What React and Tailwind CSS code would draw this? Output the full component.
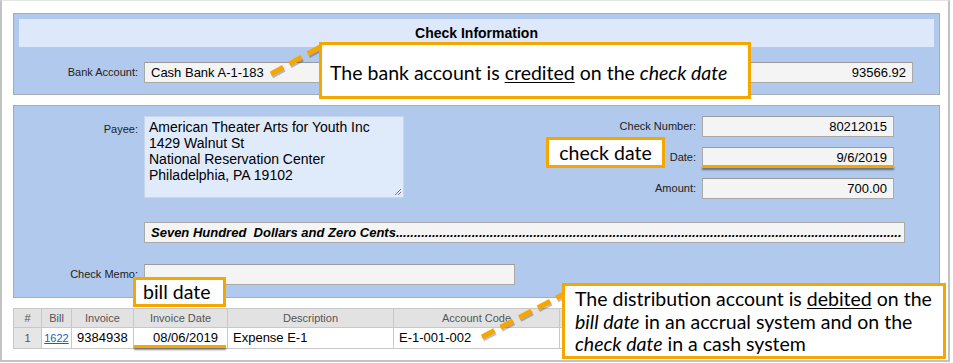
import React from "react";

const arial = { fontFamily: '"Liberation Sans", Arial, sans-serif' };
const callFont = { fontFamily: 'Lato, "Noto Sans", sans-serif' };

function Field({ className = "", children }) {
  return (
    <div
      className={
        "h-[21px] bg-[#f4f4f4] border border-[#a9a9a9] border-t-[#9a9a9a] flex items-center text-[13px] text-black " +
        className
      }
    >
      {children}
    </div>
  );
}

function Callout({ className = "", children }) {
  return (
    <div
      className={"absolute bg-white border-[3px] border-[#f5a700] text-black " + className}
      style={callFont}
    >
      {children}
    </div>
  );
}

export default function App() {
  return (
    <div className="relative w-[953px] h-[363px] bg-white overflow-hidden" style={arial}>
      <div className="w-[950px] h-[362px] border-2 border-t border-[#c2c2c2] border-t-[#e4e4e4]">
        {/* Top panel */}
        <div className="ml-[11px] mt-[12px] w-[927px] h-[82px] bg-[#b1c9ec] border border-[#a6acb5] p-[5px]">
          <div className="h-[28px] bg-[#dde9fb] flex items-center justify-center font-bold text-[14px] text-black">
            Check Information
          </div>
          <div className="flex items-center mt-[15px]">
            <div className="w-[119px] text-right text-[11px] text-[#222]">Bank Account:</div>
            <Field className="ml-[6px] w-[769px] justify-between px-[6px]">
              <span>Cash Bank A-1-183</span>
              <span>93566.92</span>
            </Field>
          </div>
        </div>

        {/* Second panel */}
        <div className="ml-[11px] mt-[10px] w-[927px] h-[193px] bg-[#b1c9ec] border border-[#a6acb5] pt-[10px]">
          <div className="flex items-start h-[86px]">
            <div className="w-[124px] text-right text-[11px] text-[#222] pt-[5px]">Payee:</div>
            <div className="relative ml-[6px] w-[260px] h-[82px] bg-[#dfeafb] border border-[#c8d6ec] px-[4px] pt-[2px] text-[14px] leading-[16px] text-black">
              <div>American Theater Arts for Youth Inc</div>
              <div>1429 Walnut St</div>
              <div>National Reservation Center</div>
              <div>Philadelphia, PA 19102</div>
              <svg className="absolute right-[1px] bottom-[1px]" width="8" height="8" viewBox="0 0 8 8">
                <path d="M7 1 L1 7 M7 4 L4 7" stroke="#777" strokeWidth="1" />
              </svg>
            </div>
            <div className="ml-auto mr-[45px] flex flex-col gap-[10px]">
              {[
                ["Check Number:", "80212015"],
                ["Date:", "9/6/2019"],
                ["Amount:", "700.00"],
              ].map(([l, v]) => (
                <div key={l} className="flex items-center">
                  <div className="w-[100px] text-right text-[11px] text-[#222]">{l}</div>
                  <Field className="ml-[6px] w-[192px] justify-end pr-[6px]">{v}</Field>
                </div>
              ))}
            </div>
          </div>
          <div className="mt-[20px] ml-[130px] w-[761px] h-[21px] bg-[#f4f4f4] border border-[#a9a9a9] flex items-center px-[6px] whitespace-pre font-bold italic text-[13px] text-black">
            <span>{"Seven Hundred  Dollars and Zero Cents" + ".".repeat(140)}</span>
          </div>
          <div className="mt-[21px] flex items-center">
            <div className="w-[124px] text-right text-[11px] text-[#222]">Check Memo:</div>
            <Field className="ml-[6px] w-[371px]" />
          </div>
        </div>

        {/* Table */}
        <div className="ml-[11px] mt-[10px] w-[927px] text-[11px]">
          <div className="flex h-[20px] bg-[#e2e2e2] border border-[#c8c8c8] text-[#555]">
            <div className="w-[28px] flex items-center justify-center border-r border-[#c8c8c8]">#</div>
            <div className="w-[30px] flex items-center justify-center border-r border-[#c8c8c8]">Bill</div>
            <div className="w-[62px] flex items-center justify-center border-r border-[#c8c8c8]">Invoice</div>
            <div className="w-[94px] flex items-center justify-center border-r border-[#c8c8c8]">Invoice Date</div>
            <div className="w-[166px] flex items-center justify-center border-r border-[#c8c8c8]">Description</div>
            <div className="w-[166px] flex items-center justify-center border-r border-[#c8c8c8]">Account Code</div>
            <div className="flex-1" />
          </div>
          <div className="flex h-[21px] bg-white border border-t-0 border-[#c8c8c8] text-[13px] text-black">
            <div className="w-[28px] flex items-center justify-center bg-[#e6e6e6] border-r border-[#c8c8c8] text-[11px] text-[#555]">1</div>
            <div className="w-[30px] flex items-center justify-center border-r border-[#c8c8c8] text-[11px]">
              <span className="text-[#1f5ea8] underline">1622</span>
            </div>
            <div className="w-[62px] flex items-center pl-[5px] border-r border-[#c8c8c8] overflow-hidden whitespace-nowrap">9384938</div>
            <div className="w-[94px] flex items-center justify-center pl-[10px] border-r border-[#c8c8c8]">08/06/2019</div>
            <div className="w-[166px] flex items-center pl-[5px] border-r border-[#c8c8c8]">Expense E-1</div>
            <div className="w-[166px] flex items-center pl-[5px] border-r border-[#c8c8c8]">E-1-001-002</div>
            <div className="flex-1" />
          </div>
        </div>
      </div>

      {/* Orange underlines */}
      <div className="absolute left-[702px] top-[165px] w-[192px] h-[3px] bg-[#f5a700] shadow-[0_2px_2px_rgba(0,0,0,0.45)]" />
      <div className="absolute left-[134px] top-[345px] w-[92px] h-[3px] bg-[#f5a700] shadow-[0_2px_2px_rgba(0,0,0,0.45)]" />

      {/* Dashed connectors */}
      <svg className="absolute left-0 top-0 pointer-events-none" width="953" height="363">
        <g strokeWidth="5" strokeDasharray="14 7" fill="none">
          <line x1="272" y1="76" x2="323" y2="48" stroke="rgba(0,0,0,0.25)" />
          <line x1="271" y1="74" x2="322" y2="46" stroke="#f5a700" />
          <line x1="483" y1="339" x2="565" y2="296" stroke="rgba(0,0,0,0.25)" />
          <line x1="482" y1="337" x2="564" y2="294" stroke="#f5a700" />
        </g>
      </svg>

      {/* Callouts */}
      <Callout className="left-[319px] top-[42px] w-[432px] h-[57px] flex items-center pl-[8px] pt-[4px] text-[19.5px]">
        <span>
          The bank account is <span className="underline underline-offset-2 decoration-1">credited</span> on the{" "}
          <i>check date</i>
        </span>
      </Callout>
      <Callout className="left-[546px] top-[137px] w-[119px] h-[31px] flex items-center justify-center text-[19.5px]">
        check date
      </Callout>
      <Callout className="left-[133px] top-[277px] w-[93px] h-[30px] flex items-center pl-[7px] text-[19.5px]">
        bill date
      </Callout>
      <Callout className="left-[562px] top-[283px] w-[384px] h-[76px] pl-[10px] pt-[2px] text-[19.5px] leading-[22.5px]">
        <div>
          The distribution account is <span className="underline underline-offset-2 decoration-1">debited</span> on the
        </div>
        <div>
          <i>bill date</i> in an accrual system and on the
        </div>
        <div>
          <i>check date</i> in a cash system
        </div>
      </Callout>
    </div>
  );
}
